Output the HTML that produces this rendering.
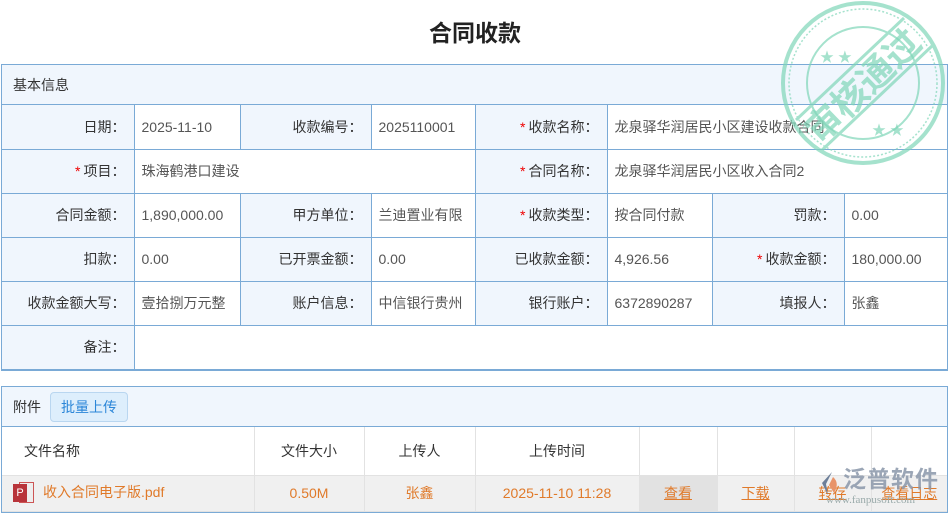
<!DOCTYPE html>
<html><head><meta charset="utf-8"><style>
*{margin:0;padding:0;box-sizing:border-box}
body{width:950px;height:515px;background:#fff;font-family:"Liberation Sans","Noto Sans CJK SC",sans-serif;font-size:14px;color:#333;position:relative;overflow:hidden}
.title{position:absolute;left:0;width:950px;top:14px;text-align:center;font-size:23px;font-weight:bold;color:#222}
.box{position:absolute;left:1px;width:947px;border:1px solid #7aaad6}
table{border-collapse:collapse;table-layout:fixed;width:100%}
td{border:1px solid #7aaad6;height:44px;vertical-align:middle;white-space:nowrap;overflow:hidden}
td.l{background:#f0f6fd;text-align:right;padding-right:8px;color:#333}
td.v{padding-left:7px;color:#555}
.s{color:#e00;margin-right:3px}
.hd{background:#f0f6fd;height:40px;line-height:40px;padding-left:11px;border-bottom:1px solid #7aaad6}
.att td{border:1px solid #e2e2e2;text-align:center;color:#333}
.att tr.r td{background:#f0f0f0;color:#e07a2a;height:36px}
.att a{color:#e07a2a;text-decoration:underline}
</style></head><body>
<div class="title">合同收款</div>
<div class="box" style="top:64px;border-bottom-width:2px">
<div class="hd">基本信息</div>
<table>
<colgroup><col style="width:132px"><col style="width:106px"><col style="width:131px"><col style="width:104px"><col style="width:132px"><col style="width:105px"><col style="width:132px"><col style="width:103px"></colgroup>
<tr><td class="l" style="border-top:none;border-left:none">日期：</td><td class="v" style="border-top:none">2025-11-10</td><td class="l" style="border-top:none">收款编号：</td><td class="v" style="border-top:none">2025110001</td><td class="l" style="border-top:none"><span class="s">*</span>收款名称：</td><td class="v" colspan="3" style="border-top:none;border-right:none">龙泉驿华润居民小区建设收款合同</td></tr>
<tr><td class="l" style="border-left:none"><span class="s">*</span>项目：</td><td class="v" colspan="3">珠海鹤港口建设</td><td class="l"><span class="s">*</span>合同名称：</td><td class="v" colspan="3" style="border-right:none">龙泉驿华润居民小区收入合同2</td></tr>
<tr><td class="l" style="border-left:none">合同金额：</td><td class="v">1,890,000.00</td><td class="l">甲方单位：</td><td class="v">兰迪置业有限</td><td class="l"><span class="s">*</span>收款类型：</td><td class="v">按合同付款</td><td class="l">罚款：</td><td class="v" style="border-right:none">0.00</td></tr>
<tr><td class="l" style="border-left:none">扣款：</td><td class="v">0.00</td><td class="l">已开票金额：</td><td class="v">0.00</td><td class="l">已收款金额：</td><td class="v">4,926.56</td><td class="l"><span class="s">*</span>收款金额：</td><td class="v" style="border-right:none">180,000.00</td></tr>
<tr><td class="l" style="border-left:none">收款金额大写：</td><td class="v">壹拾捌万元整</td><td class="l">账户信息：</td><td class="v">中信银行贵州</td><td class="l">银行账户：</td><td class="v">6372890287</td><td class="l">填报人：</td><td class="v" style="border-right:none">张鑫</td></tr>
<tr><td class="l" style="border-left:none;border-bottom:none">备注：</td><td class="v" colspan="7" style="border-right:none;border-bottom:none"></td></tr>
</table></div>

<div class="box att" style="top:386px;height:127px;border-bottom-width:2px">
<div class="hd" style="padding-left:11px;display:flex;align-items:center">附件<span style="margin-left:9px;background:#ddeefc;border:1px solid #b9d6f0;border-radius:4px;color:#2b86d8;height:30px;line-height:28px;padding:0 10px">批量上传</span></div>
<table>
<colgroup><col style="width:252px"><col style="width:110px"><col style="width:111px"><col style="width:164px"><col style="width:78px"><col style="width:77px"><col style="width:77px"><col></colgroup>
<tr><td style="height:48px;text-align:left;padding-left:22px;border-left:none;border-top:none">文件名称</td><td style="border-top:none">文件大小</td><td style="border-top:none">上传人</td><td style="border-top:none">上传时间</td><td style="border-top:none"></td><td style="border-top:none"></td><td style="border-top:none"></td><td style="border-top:none;border-right:none"></td></tr>
<tr class="r"><td style="text-align:left;padding-left:11px;border-left:none"><span style="display:inline-block;vertical-align:middle;width:22px;height:22px;position:relative;margin-right:8px"><span style="position:absolute;left:6px;top:0;width:15px;height:21px;background:#eee;border:1px solid #c55"></span><span style="position:absolute;left:0;top:2px;width:14px;height:18px;background:#b8343a;color:#fff;font-size:11px;line-height:18px;text-align:center">P</span></span>收入合同电子版.pdf</td><td>0.50M</td><td>张鑫</td><td>2025-11-10 11:28</td><td style="background:#e2e2e2"><a>查看</a></td><td><a>下载</a></td><td><a>转存</a></td><td style="border-right:none"><a>查看日志</a></td></tr>
</table></div>

<svg style="position:absolute;left:818px;top:471px" width="24" height="26" viewBox="0 0 24 26"><path d="M14 1 L4 12 L10 24 L8 13 Z" fill="#6d7f99"/><path d="M15 6 Q22 12 16 22 L11 14 Z" fill="#e8946a"/></svg>
<div style="position:absolute;left:843px;top:468px;white-space:nowrap;font-size:23px;color:#8a97aa;font-weight:bold;opacity:.85;line-height:1;letter-spacing:1px">泛普软件</div>
<div style="position:absolute;left:826px;top:494px;white-space:nowrap;font-family:'Liberation Serif',serif;font-size:11px;color:#9aa">www.fanpusoft.com</div>

<svg style="position:absolute;left:780px;top:0" width="170" height="170" viewBox="0 0 170 170">
<g fill="none" stroke="#7fd6b8" opacity=".7">
<circle cx="83" cy="83" r="80" stroke-width="4"/>
<circle cx="83" cy="83" r="74" stroke-width="1.5" stroke-dasharray="2 2"/>
<circle cx="83" cy="83" r="56" stroke-width="2"/>
<line x1="16" y1="120" x2="124" y2="18" stroke-width="3"/>
<line x1="40" y1="152" x2="152" y2="46" stroke-width="3"/>
</g>
<text x="85" y="98" transform="rotate(-44 85 88)" text-anchor="middle" font-size="36" font-weight="bold" fill="#7fd6b8" opacity=".7" font-family="Noto Sans CJK SC,sans-serif">审核通过</text>
<text x="40" y="62" fill="#7fd6b8" font-size="14" opacity=".7">★ ★</text>
<text x="92" y="135" fill="#7fd6b8" font-size="14" opacity=".7">★ ★</text>
</svg>
</body></html>
